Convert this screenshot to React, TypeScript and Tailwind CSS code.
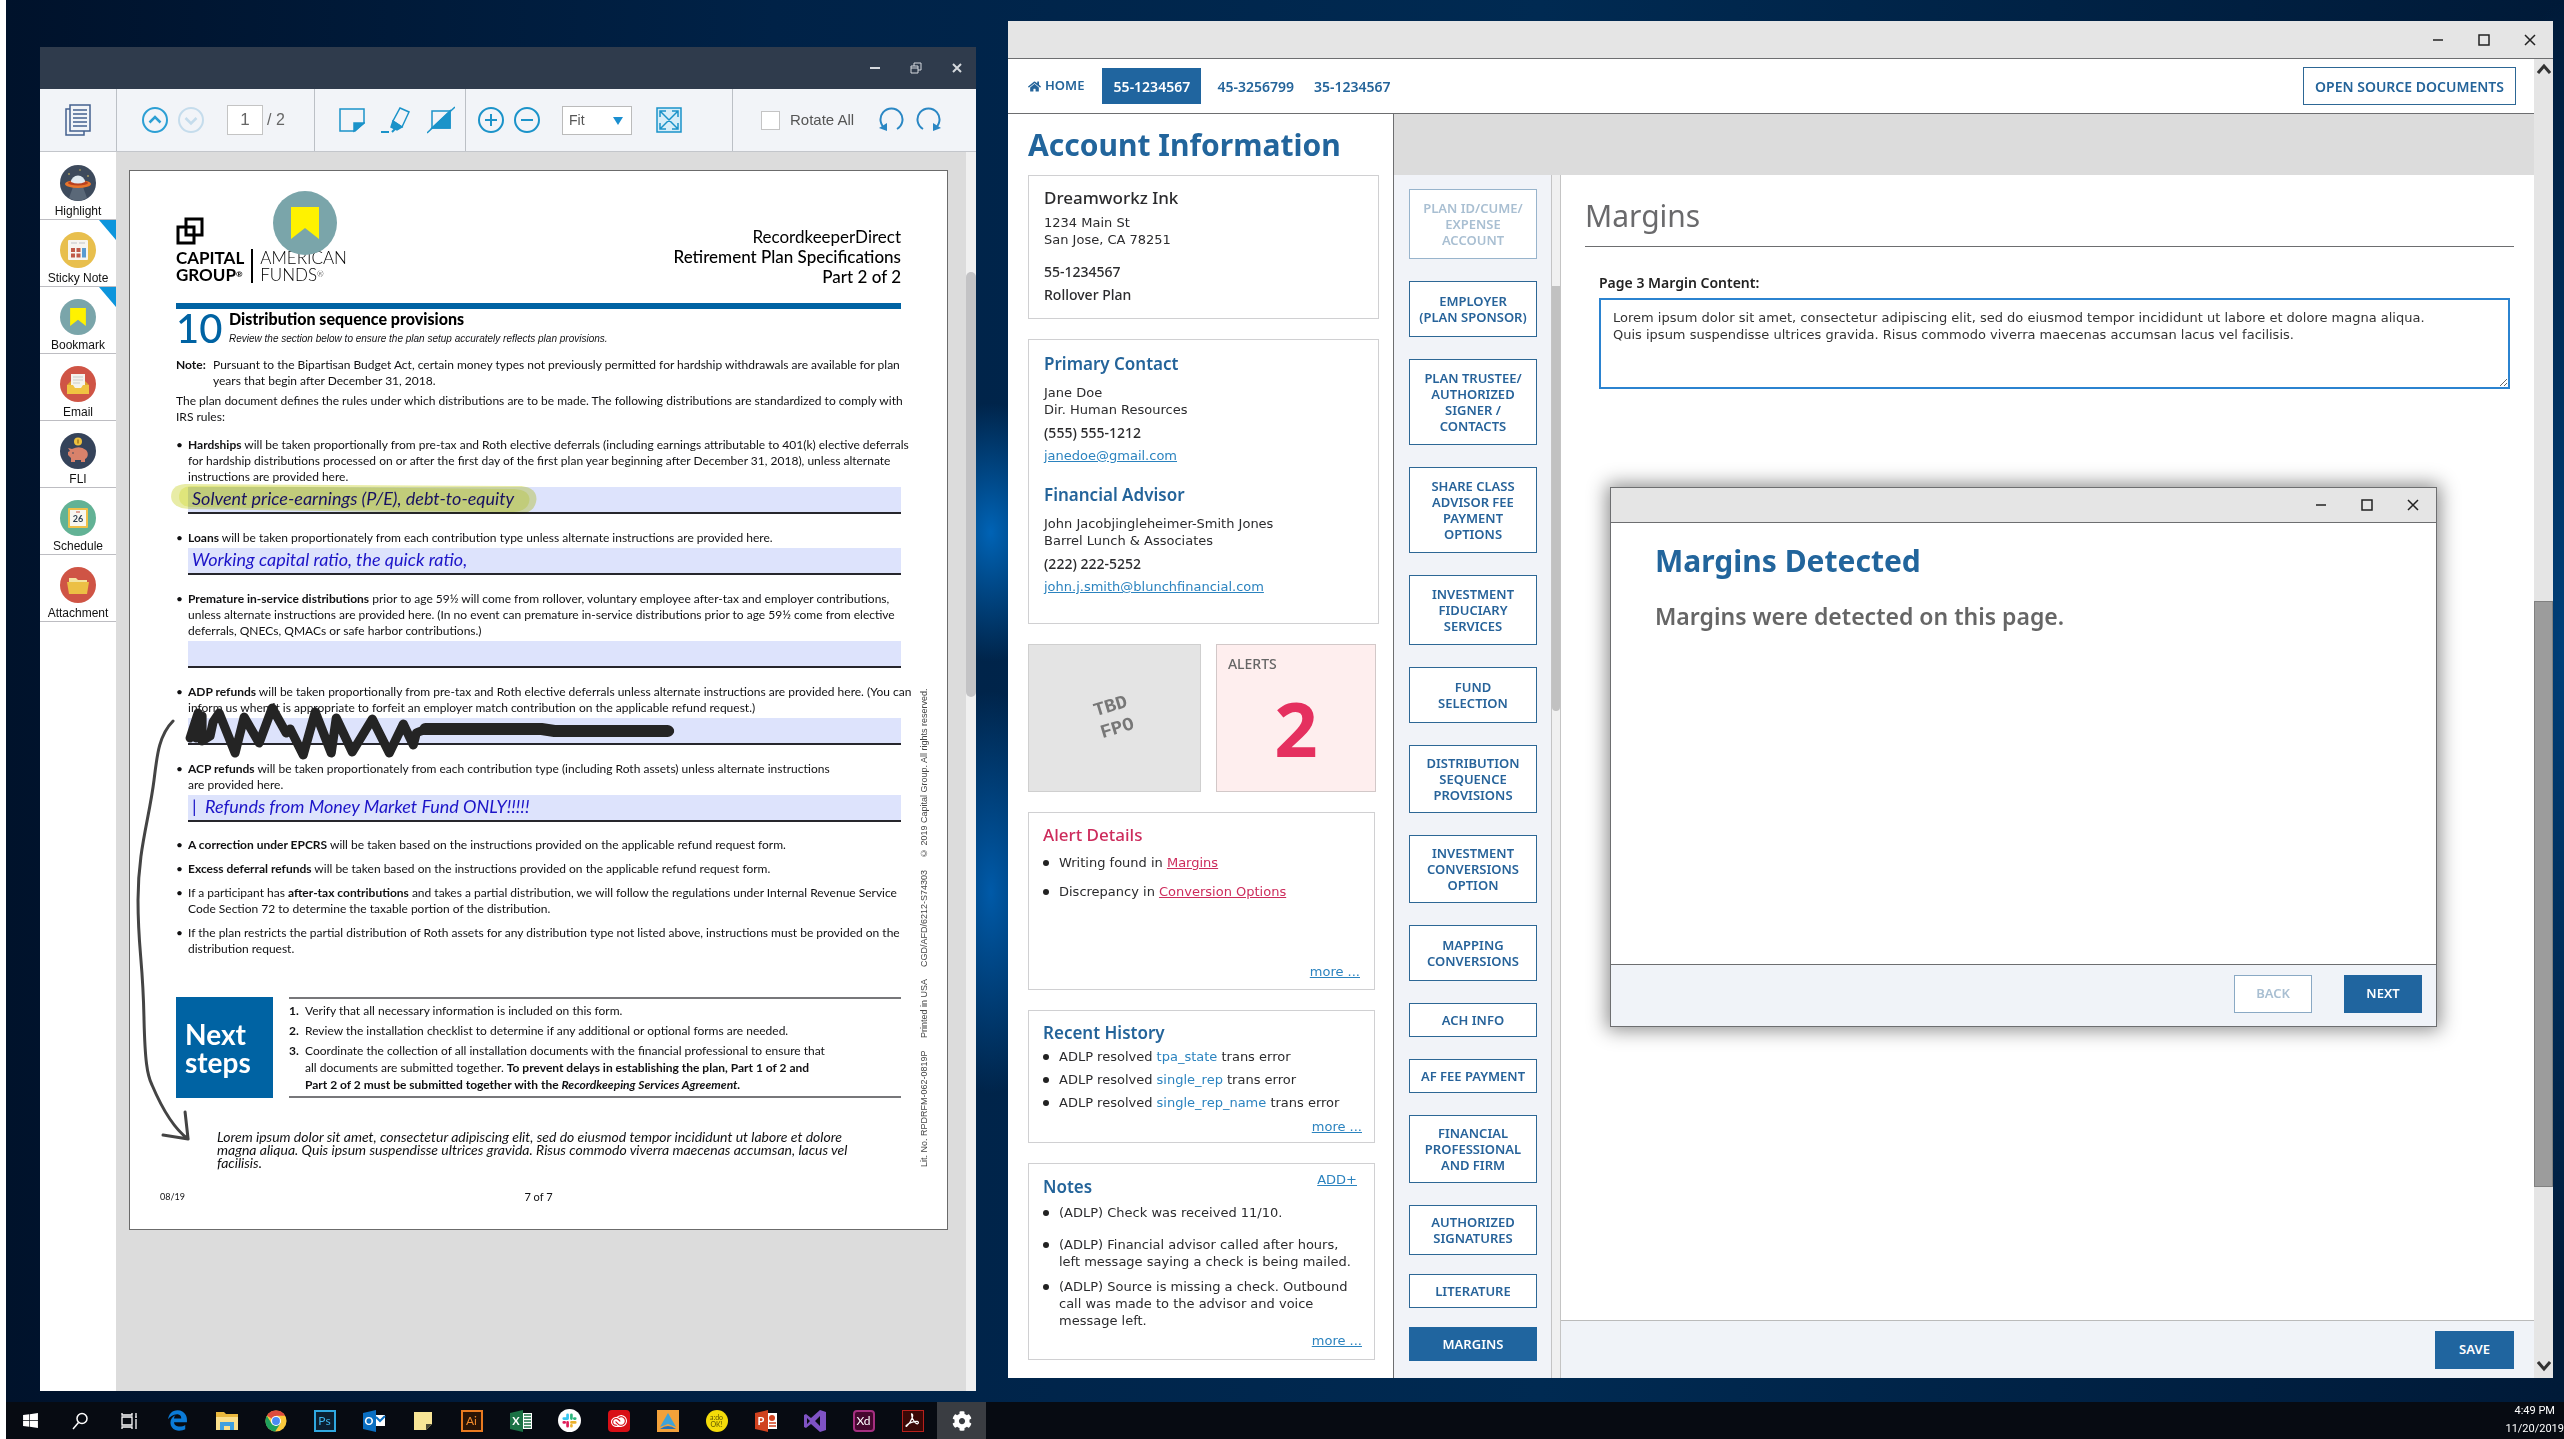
import type { ReactNode } from 'react';
import clsx from 'clsx';
import { FaHome, FaWindows, FaCog } from 'react-icons/fa';
import { FaEdgeLegacy } from 'react-icons/fa6';
import { SiAdobecreativecloud } from 'react-icons/si';

type NavItem = { label: string[]; height: string; state?: 'disabled' | 'active' };

const navItems: NavItem[] = [
  { label: ['PLAN ID/CUME/', 'EXPENSE', 'ACCOUNT'], height: 'h-[70px]', state: 'disabled' },
  { label: ['EMPLOYER', '(PLAN SPONSOR)'], height: 'h-14' },
  { label: ['PLAN TRUSTEE/', 'AUTHORIZED', 'SIGNER /', 'CONTACTS'], height: 'h-[86px]' },
  { label: ['SHARE CLASS', 'ADVISOR FEE', 'PAYMENT', 'OPTIONS'], height: 'h-[86px]' },
  { label: ['INVESTMENT', 'FIDUCIARY', 'SERVICES'], height: 'h-[70px]' },
  { label: ['FUND', 'SELECTION'], height: 'h-14' },
  { label: ['DISTRIBUTION', 'SEQUENCE', 'PROVISIONS'], height: 'h-[68px]' },
  { label: ['INVESTMENT', 'CONVERSIONS', 'OPTION'], height: 'h-[68px]' },
  { label: ['MAPPING', 'CONVERSIONS'], height: 'h-14' },
  { label: ['ACH INFO'], height: 'h-[34px]' },
  { label: ['AF FEE PAYMENT'], height: 'h-[34px]' },
  { label: ['FINANCIAL', 'PROFESSIONAL', 'AND FIRM'], height: 'h-[68px]' },
  { label: ['AUTHORIZED', 'SIGNATURES'], height: 'h-[50px]' },
];

const closingItems: NavItem[] = [
  { label: ['LITERATURE'], height: 'h-[34px]' },
  { label: ['MARGINS'], height: 'h-[34px]', state: 'active' },
];

const lorem =
  'Lorem ipsum dolor sit amet, consectetur adipiscing elit, sed do eiusmod tempor incididunt ut labore et dolore magna aliqua.\nQuis ipsum suspendisse ultrices gravida. Risus commodo viverra maecenas accumsan lacus vel facilisis.';

/* ---------- tool icons ---------- */

function BookmarkIcon({ className }: { className: string }) {
  return (
    <svg viewBox="0 0 64 64" className={className}>
      <circle cx="32" cy="32" r="32" fill="#7aa5aa" />
      <path d="M18 16h28v32L32 37 18 48z" fill="#fff200" />
    </svg>
  );
}

const tools: { label: string; corner?: boolean; icon: ReactNode }[] = [
  {
    label: 'Highlight',
    icon: (
      <svg viewBox="0 0 36 36" className="size-9">
        <circle cx="18" cy="18" r="18" fill="#3d4a5c" />
        <path d="M13 22h10l4 11a18 18 0 0 1-18 0z" fill="#5a6878" />
        <ellipse cx="18" cy="19" rx="13" ry="4" fill="#e8762c" />
        <ellipse cx="18" cy="18" rx="10" ry="2.500" fill="#b9411f" />
        <path d="M11 17a7 6.500 0 0 1 14 0q-7 3-14 0z" fill="#dfe9f0" />
        <circle cx="9" cy="9" r="0.800" fill="#f0d060" />
        <circle cx="28" cy="11" r="0.800" fill="#f0d060" />
        <circle cx="20" cy="5" r="0.700" fill="#f0d060" />
      </svg>
    ),
  },
  {
    label: 'Sticky Note',
    corner: true,
    icon: (
      <svg viewBox="0 0 36 36" className="size-9">
        <circle cx="18" cy="18" r="18" fill="#e8bf4d" />
        <rect x="8" y="8" width="20" height="20" rx="1" fill="#f7f5f0" />
        <path d="M11 11h6M19 11h6" stroke="#d4d4d4" strokeWidth="1.500" />
        <path d="M11 16h4v4h-4zM16.500 16h4v4h-4zM11 21.500h4v4h-4zM16.500 21.500h4v4h-4z" fill="#c05a48" />
        <path d="M22 16h4v9.500h-4z" fill="#5a9bd0" />
      </svg>
    ),
  },
  { label: 'Bookmark', corner: true, icon: <BookmarkIcon className="size-9" /> },
  {
    label: 'Email',
    icon: (
      <svg viewBox="0 0 36 36" className="size-9">
        <circle cx="18" cy="18" r="18" fill="#cf5445" />
        <path d="M7 19l4-4h14l4 4v9H7z" fill="#dfa32f" />
        <rect x="11" y="8" width="14" height="14" fill="#f5f3ec" />
        <path d="M13 11h10M13 14h10M13 17h7" stroke="#c9cdc9" />
        <path d="M7 19h6l2 3h6l2-3h6v9H7z" fill="#f0c341" />
      </svg>
    ),
  },
  {
    label: 'FLI',
    icon: (
      <svg viewBox="0 0 36 36" className="size-9">
        <circle cx="18" cy="18" r="18" fill="#35435a" />
        <circle cx="18" cy="8.500" r="4" fill="#efc13f" />
        <path d="M18 6.500v4" stroke="#a5781c" strokeWidth="1.500" />
        <path d="M8 15l4 1q8-4 14 1c3 3 2 8-1 9v3h-4v-2h-6v2h-4v-4l-3-3v-3l2-1z" fill="#d9826b" />
        <circle cx="13" cy="20" r="0.800" fill="#35435a" />
      </svg>
    ),
  },
  {
    label: 'Schedule',
    icon: (
      <svg viewBox="0 0 36 36" className="size-9">
        <circle cx="18" cy="18" r="18" fill="#62b295" />
        <rect x="8" y="8" width="20" height="20" rx="1" fill="#efc04a" />
        <rect x="10" y="10" width="16" height="16" fill="#f8f7f1" />
        <path d="M16 12h4" stroke="#c8553f" />
        <text x="18" y="22" textAnchor="middle" fontSize="9" fontWeight="700" fontFamily="Lato, sans-serif" fill="#2c3e50">26</text>
      </svg>
    ),
  },
  {
    label: 'Attachment',
    icon: (
      <svg viewBox="0 0 36 36" className="size-9">
        <circle cx="18" cy="18" r="18" fill="#cf5445" />
        <path d="M9 11h7l2 2h9v5H9z" fill="#f3e4a0" />
        <path d="M7 15h22l-2 12H9z" fill="#ecc044" />
      </svg>
    ),
  },
];

/* ---------- source document viewer ---------- */

function Divider() {
  return <span className="h-full w-px shrink-0 bg-[#bcc0c6]" />;
}

function Toolbar() {
  return (
    <div className="flex h-[63px] shrink-0 items-center border-b border-[#c3c6cb] bg-[#f2f4f8] text-[#1b93c9]">
      <div className="flex w-[76px] shrink-0 justify-center">
        <button aria-label="Pages">
          <svg viewBox="0 0 26 32" className="h-8 w-[26px]" fill="none" stroke="#44608f" strokeWidth="1.500">
            <path d="M5 1h20v26H5z M5 5H1v26h18v-4 M8 6h14M8 10h14M8 14h14M8 18h14M8 22h14" />
          </svg>
        </button>
      </div>
      <Divider />
      <div className="flex w-[197px] shrink-0 items-center pl-6 text-[17px] text-[#666]">
        <button aria-label="Previous page">
          <svg viewBox="0 0 28 28" className="size-7" fill="none" stroke="#2c9fd4" strokeWidth="2">
            <circle cx="14" cy="14" r="12" /><path d="M8.500 16.500L14 11l5.500 5.500" strokeWidth="2.500" />
          </svg>
        </button>
        <button aria-label="Next page" className="ml-2">
          <svg viewBox="0 0 28 28" className="size-7" fill="none" stroke="#c5dcec" strokeWidth="2">
            <circle cx="14" cy="14" r="12" /><path d="M8.500 12L14 17.500l5.500-5.500" strokeWidth="2.500" />
          </svg>
        </button>
        <input aria-label="Page" defaultValue="1" className="ml-[22px] h-[30px] w-9 border border-[#c4c4c4] bg-white text-center" />
        <span className="ml-1 text-base">/ 2</span>
      </div>
      <Divider />
      <div className="flex w-[150px] shrink-0 items-center gap-4 pl-6">
        <button aria-label="Add note">
          <svg viewBox="0 0 26 26" className="size-[26px]" fill="none" stroke="currentColor" strokeWidth="1.500">
            <path d="M1 2h24v14l-9 8H1z" /><path d="M15 24v-8h10z" fill="currentColor" />
          </svg>
        </button>
        <button aria-label="Marker">
          <svg viewBox="0 0 30 28" className="h-7 w-[30px]" fill="none" stroke="currentColor" strokeWidth="1.500">
            <path d="M19 2l9 4-7 15-9-6z" /><path d="M12 15l9 6-5 3-6-3z" fill="currentColor" /><path d="M0 26h8M11 26l3-3" strokeWidth="2" />
          </svg>
        </button>
        <button aria-label="Contrast">
          <svg viewBox="0 0 28 28" className="size-7" fill="none" stroke="currentColor" strokeWidth="1.500">
            <path d="M5 5h18v17H5z" /><path d="M23 5v17H5z" fill="currentColor" /><path d="M0 27L28 1" />
          </svg>
        </button>
      </div>
      <Divider />
      <div className="flex flex-1 items-center pl-3">
        <button aria-label="Zoom in">
          <svg viewBox="0 0 26 26" className="size-[26px]" fill="none" stroke="currentColor" strokeWidth="2">
            <circle cx="13" cy="13" r="12" /><path d="M7 13h12M13 7v12" />
          </svg>
        </button>
        <button aria-label="Zoom out" className="ml-[10px]">
          <svg viewBox="0 0 26 26" className="size-[26px]" fill="none" stroke="currentColor" strokeWidth="2">
            <circle cx="13" cy="13" r="12" /><path d="M7 13h12" />
          </svg>
        </button>
        <div className="relative ml-[22px]">
          <select aria-label="Zoom" className="h-[29px] w-[70px] appearance-none border border-[#bbb] bg-white pl-[6px] text-sm text-[#555]">
            <option>Fit</option>
          </select>
          <svg viewBox="0 0 10 8" className="pointer-events-none absolute top-[11px] right-[9px] h-2 w-[10px]">
            <path d="M0 0h10L5 8z" fill="#1b8fd0" />
          </svg>
        </div>
        <button aria-label="Full screen" className="ml-6">
          <svg viewBox="0 0 26 26" className="size-[26px]" fill="none" stroke="currentColor" strokeWidth="1.500">
            <path d="M1 1h24v24H1z" fill="#d6edf8" />
            <path d="M4 10V4h6M16 4h6v6M22 16v6h-6M10 22H4v-6M4 4l18 18M22 4L4 22" />
          </svg>
        </button>
      </div>
      <Divider />
      <div className="flex w-[243px] shrink-0 items-center pl-7">
        <label className="flex items-center gap-[10px] text-[15px] text-[#555]">
          <input type="checkbox" className="size-[19px] appearance-none border border-[#c4c4c4] bg-white" />
          Rotate All
        </label>
        <button aria-label="Rotate left" className="ml-6">
          <svg viewBox="0 0 26 26" className="size-[26px]" fill="none" stroke="#2a87c4" strokeWidth="2">
            <path d="M8 22A11 11 0 1 1 19 22" /><path d="M1 21l8 3 0-8z" fill="#2a87c4" stroke="none" />
          </svg>
        </button>
        <button aria-label="Rotate right" className="ml-3">
          <svg viewBox="0 0 26 26" className="size-[26px]" fill="none" stroke="#2a87c4" strokeWidth="2">
            <path d="M18 22A11 11 0 1 0 7 22" /><path d="M25 21l-8 3 0-8z" fill="#2a87c4" stroke="none" />
          </svg>
        </button>
      </div>
    </div>
  );
}

function Provision({ children, field, className }: { children: ReactNode; field?: string; className: string }) {
  return (
    <li className={clsx('flex', className)}>
      <span className="w-3 shrink-0">•</span>
      <div className="min-w-0 flex-1">
        <p className="whitespace-nowrap">{children}</p>
        {field !== undefined && (
          <input
            aria-label="Alternate instructions"
            defaultValue={field}
            className="mt-[2px] block h-[27px] w-full border-b-2 border-[#26262c] bg-[#dde3fc] px-1 pb-1 font-['Lato',sans-serif] text-[18px] text-[#1c14c8] italic"
          />
        )}
      </div>
    </li>
  );
}

function DocumentPage() {
  return (
    <article className="relative ml-[13px] flex border border-[#6b6b6b] bg-white font-['Lato',Arial,sans-serif] text-[12px] leading-4 text-[#101012]">
      <div className="min-w-0 flex-1 pt-[46px] pb-6 pl-[46px]">
        <header className="flex justify-between text-black">
          <div>
            <svg viewBox="0 0 28 28" className="size-7" fill="none" stroke="#000" strokeWidth="3">
              <path d="M10 2h16v16H10zM2 10h16v16H2z" />
            </svg>
            <div className="mt-1 flex text-[17px] leading-[17px]">
              <p className="border-r-2 border-black pr-[7px] font-bold">CAPITAL<br />GROUP<sup className="text-[8px]">®</sup></p>
              <p className="pl-[7px] font-light">AMERICAN<br />FUNDS<sup className="text-[8px]">®</sup></p>
            </div>
          </div>
          <div className="pt-[10px] text-right text-[17px] leading-5">
            <p>RecordkeeperDirect</p>
            <p className="font-medium">Retirement Plan Specifications</p>
            <p className="font-medium">Part 2 of 2</p>
          </div>
        </header>
        <div className="mt-4 h-[6px] bg-[#0063a3]" />
        <div className="flex">
          <span className="w-[53px] text-[40px] leading-[38px] font-medium text-[#0063a3]">10</span>
          <div className="leading-5">
            <h2 className="text-base leading-5 font-black text-black">Distribution sequence provisions</h2>
            <p className="font-['Liberation_Sans',Arial,sans-serif] text-[10px] italic">Review the section below to ensure the plan setup accurately reflects plan provisions.</p>
          </div>
        </div>
        <div className="mt-2 flex whitespace-nowrap">
          <b className="w-[37px] shrink-0">Note:</b>
          <p>Pursuant to the Bipartisan Budget Act, certain money types not previously permitted for hardship withdrawals are available for plan<br />years that begin after December 31, 2018.</p>
        </div>
        <p className="mt-1 whitespace-nowrap">The plan document defines the rules under which distributions are to be made. The following distributions are standardized to comply with<br />IRS rules:</p>
        <ul>
          <Provision className="mt-3" field="Solvent price-earnings (P/E), debt-to-equity">
            <b>Hardships</b> will be taken proportionally from pre-tax and Roth elective deferrals (including earnings attributable to 401(k) elective deferrals<br />
            for hardship distributions processed on or after the first day of the first plan year beginning after December 31, 2018), unless alternate<br />
            instructions are provided here.
          </Provision>
          <Provision className="mt-4" field="Working capital ratio, the quick ratio,">
            <b>Loans</b> will be taken proportionately from each contribution type unless alternate instructions are provided here.
          </Provision>
          <Provision className="mt-4" field="">
            <b>Premature in-service distributions</b> prior to age 59½ will come from rollover, voluntary employee after-tax and employer contributions,<br />
            unless alternate instructions are provided here. (In no event can premature in-service distributions prior to age 59½ come from elective<br />
            deferrals, QNECs, QMACs or safe harbor contributions.)
          </Provision>
          <Provision className="mt-4" field="">
            <b>ADP refunds</b> will be taken proportionally from pre-tax and Roth elective deferrals unless alternate instructions are provided here. (You can<br />
            inform us when it is appropriate to forfeit an employer match contribution on the applicable refund request.)
          </Provision>
          <Provision className="mt-4" field="|  Refunds from Money Market Fund ONLY!!!!!">
            <b>ACP refunds</b> will be taken proportionately from each contribution type (including Roth assets) unless alternate instructions<br />
            are provided here.
          </Provision>
          <Provision className="mt-[15px]"><b>A correction under EPCRS</b> will be taken based on the instructions provided on the applicable refund request form.</Provision>
          <Provision className="mt-2"><b>Excess deferral refunds</b> will be taken based on the instructions provided on the applicable refund request form.</Provision>
          <Provision className="mt-2">
            If a participant has <b>after-tax contributions</b> and takes a partial distribution, we will follow the regulations under Internal Revenue Service<br />
            Code Section 72 to determine the taxable portion of the distribution.
          </Provision>
          <Provision className="mt-2">
            If the plan restricts the partial distribution of Roth assets for any distribution type not listed above, instructions must be provided on the<br />
            distribution request.
          </Provision>
        </ul>
        <section className="mt-10 flex gap-4">
          <h3 className="flex w-[97px] items-center bg-[#0063a3] pl-[9px] text-[28px] leading-7 font-bold text-white">Next<br />steps</h3>
          <ol className="flex-1 space-y-[3px] border-y-2 border-[#77777a] py-[3px] leading-[17px]">
            <li className="flex"><b className="w-4">1.</b>Verify that all necessary information is included on this form.</li>
            <li className="flex"><b className="w-4">2.</b>Review the installation checklist to determine if any additional or optional forms are needed.</li>
            <li className="flex">
              <b className="w-4">3.</b>
              <p>
                Coordinate the collection of all installation documents with the financial professional to ensure that<br />
                all documents are submitted together. <b>To prevent delays in establishing the plan, Part 1 of 2 and<br />
                Part 2 of 2 must be submitted together with the <i>Recordkeeping Services Agreement.</i></b>
              </p>
            </li>
          </ol>
        </section>
        <p className="mt-8 pl-[41px] font-['Lato',cursive] text-[14px] leading-[13px] whitespace-nowrap italic">
          Lorem ipsum dolor sit amet, consectetur adipiscing elit, sed do eiusmod tempor incididunt ut labore et dolore<br />
          magna aliqua. Quis ipsum suspendisse ultrices gravida. Risus commodo viverra maecenas accumsan, lacus vel<br />
          facilisis.
        </p>
        <footer className="-mx-4 mt-5 flex text-[11px]">
          <span className="flex-1 text-[9px]">08/19</span>
          <span>7 of 7</span>
          <span className="flex-1" />
        </footer>
      </div>
      <p className="flex w-[46px] shrink-0 rotate-180 items-center justify-start gap-3 pt-[62px] font-['Liberation_Sans',Arial,sans-serif] text-[9px] whitespace-nowrap text-[#444] [writing-mode:vertical-rl]">
        <span>Lit. No. RPDRFM-062-0819P</span>
        <span>Printed in USA</span>
        <span>CGD/AFD/6212-S74303</span>
        <span>© 2019 Capital Group. All rights reserved.</span>
      </p>
      {/* pen and highlighter marks */}
      <svg viewBox="131 171 816 1058" preserveAspectRatio="none" className="pointer-events-none absolute inset-0 size-full mix-blend-multiply">
        <path d="M186 484L522 486Q537 488 537 499Q536 513 520 514L190 509Q173 508 172 497Q172 485 186 484z" fill="#d8e06a" fillOpacity="0.600" />
        <path d="M192 486L515 489Q530 490 530 500Q529 511 514 512L192 507Q180 506 180 497Q180 487 192 486z" fill="#dbe26a" fillOpacity="0.700" />
      </svg>
      <svg viewBox="131 171 816 1058" preserveAspectRatio="none" className="pointer-events-none absolute inset-0 size-full" fill="none" strokeLinecap="round" strokeLinejoin="round">
        <path
          d="M191 738L199 713L197 738L203 716L203 741L211 736L214 722L220 713L236 753L245 717L260 743L273 708L287 733L291 729L304 755L316 712L332 753L337 718L353 752L373 719L390 753L404 724L414 745L417 733Q423 729 446 729L542 729Q548 731 555 731L670 731"
          stroke="#242424" strokeWidth="9"
        />
        <path d="M426 729H542L555 731H668" stroke="#242424" strokeWidth="12" />
        <path d="M174 721C160 735 158 755 155 780C150 820 139 850 139 900C139 950 144 960 145 1020C146 1060 148 1075 153 1085Q170 1125 189 1139M164 1135L189 1139L186 1112" stroke="#444" strokeWidth="3" />
      </svg>
      <BookmarkIcon className="absolute top-5 left-[143px] size-16" />
    </article>
  );
}

function DocumentViewer() {
  return (
    <section className="mt-[47px] mb-[11px] flex w-[936px] shrink-0 flex-col bg-[#dcdcdc] font-['Liberation_Sans',Arial,sans-serif]">
      <div className="flex h-[42px] shrink-0 items-center justify-end gap-[27px] bg-[#2f3b4c] pr-3 text-[#d5d9de]">
        <button aria-label="Minimize"><svg viewBox="0 0 14 14" className="size-[14px]" stroke="currentColor" strokeWidth="2"><path d="M2 7h10" /></svg></button>
        <button aria-label="Restore"><svg viewBox="0 0 14 14" className="size-[14px]" fill="none" stroke="currentColor"><path d="M2 5h7v7H2zM2 7h7M5 5V2h7v7H9" /></svg></button>
        <button aria-label="Close"><svg viewBox="0 0 14 14" className="size-[14px]" stroke="currentColor" strokeWidth="2"><path d="M3 3l8 8M11 3l-8 8" /></svg></button>
      </div>
      <Toolbar />
      <div className="flex flex-1">
        <nav className="w-[76px] shrink-0 bg-white pt-px">
          {tools.map(t => (
            <button key={t.label} className="relative flex h-[67px] w-full flex-col items-center justify-end gap-[2px] border-b border-[#bdbdc2] text-[12px] leading-4 text-[#111]">
              {t.icon}
              {t.label}
              {t.corner && (
                <svg viewBox="0 0 17 20" className="absolute top-0 right-0 h-5 w-[17px]"><path d="M0 0h17v20z" fill="#0d95dc" /></svg>
              )}
            </button>
          ))}
        </nav>
        <div className="min-w-0 flex-1 pt-[18px] pr-[18px]">
          <DocumentPage />
        </div>
        <div className="w-[10px] bg-[#f0f0f0] pt-[120px]">
          <div className="h-[425px] rounded-full bg-[#c3c3c5]" />
        </div>
      </div>
    </section>
  );
}

/* ---------- account window ---------- */

function WindowButtons({ className }: { className: string }) {
  return (
    <div className={clsx('flex items-center justify-end border-b border-[#6d6e70] bg-[#e5e5e5] text-[#222]', className)}>
      <button aria-label="Minimize"><svg viewBox="0 0 12 12" className="size-3" stroke="currentColor" strokeWidth="1.500"><path d="M1 6h10" /></svg></button>
      <button aria-label="Maximize"><svg viewBox="0 0 12 12" className="size-3" fill="none" stroke="currentColor" strokeWidth="1.500"><path d="M1 1h10v10H1z" /></svg></button>
      <button aria-label="Close"><svg viewBox="0 0 12 12" className="size-3" stroke="currentColor" strokeWidth="1.500"><path d="M1 1l10 10M11 1L1 11" /></svg></button>
    </div>
  );
}

function Card({ children, className }: { children: ReactNode; className?: string }) {
  return <section className={clsx('border border-[#d0d0d2] bg-white', className)}>{children}</section>;
}

function CardTitle({ children, className }: { children: ReactNode; className: string }) {
  return <h2 className={clsx("font-['Noto_Sans',sans-serif] text-[17px] leading-5", className)}>{children}</h2>;
}

function Strong({ children, className }: { children: ReactNode; className: string }) {
  return <p className={clsx("font-['Noto_Sans',sans-serif] text-[14px] font-medium", className)}>{children}</p>;
}

function Contact({ title, name, role, phone, email }: { title: string; name: string; role: string; phone: string; email: string }) {
  return (
    <div>
      <CardTitle className="font-semibold text-[#24649a]">{title}</CardTitle>
      <p className="mt-[10px]">{name}</p>
      <p>{role}</p>
      <Strong className="mt-[6px]">{phone}</Strong>
      <a href={`mailto:${email}`} className="mt-[6px] block text-[#2b83bf] underline">{email}</a>
    </div>
  );
}

function Bullet({ children }: { children: ReactNode }) {
  return (
    <li className="flex whitespace-nowrap">
      <span className="mt-[6px] mr-[10px] size-[6px] shrink-0 rounded-full bg-[#222]" />
      <div>{children}</div>
    </li>
  );
}

function More() {
  return <a href="#more" className="text-[#2b83bf] underline">more ...</a>;
}

function AccountPanel() {
  return (
    <aside className="w-[386px] shrink-0 border-r border-[#6d6e70] bg-white pr-[14px] pl-5 font-['DejaVu_Sans',sans-serif] text-[13px] leading-[17px] text-[#2b2b2d]">
      <h1 className="flex h-[61px] items-center font-['Noto_Sans',sans-serif] text-[30px] leading-10 font-bold text-[#22659c]">Account Information</h1>
      <Card className="px-[15px] pt-3 pb-[15px]">
        <CardTitle className="font-medium">Dreamworkz Ink</CardTitle>
        <p className="mt-[6px]">1234 Main St</p>
        <p>San Jose, CA 78251</p>
        <Strong className="mt-[15px]">55-1234567</Strong>
        <Strong className="mt-[6px]">Rollover Plan</Strong>
      </Card>
      <Card className="mt-5 space-y-[21px] px-[15px] pt-[14px] pb-7">
        <Contact title="Primary Contact" name="Jane Doe" role="Dir. Human Resources" phone="(555) 555-1212" email="janedoe@gmail.com" />
        <Contact title="Financial Advisor" name="John Jacobjingleheimer-Smith Jones" role="Barrel Lunch & Associates" phone="(222) 222-5252" email="john.j.smith@blunchfinancial.com" />
      </Card>
      <div className="mt-5 mr-[3px] flex h-[148px] gap-[15px]">
        <div className="flex flex-[173] items-center justify-center border border-[#cfcfcf] bg-[#e4e4e4]">
          <p className="-rotate-[17deg] font-['Liberation_Mono',monospace] text-[19px] leading-[23px] font-bold text-[#777]">TBD<br />FPO</p>
        </div>
        <div className="flex-[160] border border-[#d2c8c8] bg-[#feeeee] pt-[9px] font-['Noto_Sans',sans-serif]">
          <h2 className="pl-[11px] text-sm leading-5 font-medium text-[#666]">ALERTS</h2>
          <p className="text-center text-[76px] leading-[108px] font-bold text-[#e5305f]">2</p>
        </div>
      </div>
      <Card className="mt-5 mr-1 flex h-[178px] flex-col pt-3 pr-[14px] pb-[9px] pl-[14px]">
        <CardTitle className="font-medium text-[#cd2c5c]">Alert Details</CardTitle>
        <ul className="mt-[9px] flex-1 space-y-3">
          <Bullet>Writing found in <a href="#margins" className="text-[#cd2c5c] underline">Margins</a></Bullet>
          <Bullet>Discrepancy in <a href="#conversion" className="text-[#cd2c5c] underline">Conversion Options</a></Bullet>
        </ul>
        <div className="text-right"><More /></div>
      </Card>
      <Card className="mt-5 mr-1 pt-3 pr-3 pb-[7px] pl-[14px]">
        <CardTitle className="font-semibold text-[#24649a]">Recent History</CardTitle>
        <ul className="mt-[5px] space-y-[6px]">
          {['tpa_state', 'single_rep', 'single_rep_name'].map(f => (
            <Bullet key={f}>ADLP resolved <span className="text-[#2b83bf]">{f}</span> trans error</Bullet>
          ))}
        </ul>
        <div className="mt-[7px] text-right"><More /></div>
      </Card>
      <Card className="mt-5 mr-1 pt-[7px] pr-3 pb-[10px] pl-[14px]">
        <div className="flex justify-between">
          <CardTitle className="pt-[6px] font-semibold text-[#24649a]">Notes</CardTitle>
          <a href="#add" className="mr-[5px] text-[#2b83bf] underline">ADD+</a>
        </div>
        <ul className="mt-[7px]">
          <Bullet>(ADLP) Check was received 11/10.</Bullet>
          <li className="h-[15px]" aria-hidden />
          <Bullet>(ADLP) Financial advisor called after hours,<br />left message saying a check is being mailed.</Bullet>
          <li className="h-2" aria-hidden />
          <Bullet>(ADLP) Source is missing a check. Outbound<br />call was made to the advisor and voice<br />message left.</Bullet>
        </ul>
        <div className="mt-[3px] text-right"><More /></div>
      </Card>
    </aside>
  );
}

function NavButton({ item }: { item: NavItem }) {
  return (
    <button
      disabled={item.state === 'disabled'}
      className={clsx(
        'flex w-full shrink-0 items-center justify-center border text-[13px] leading-4 font-semibold whitespace-nowrap',
        item.height,
        item.state === 'disabled' && 'border-[#98b4cc] bg-white text-[#a9bfd2]',
        item.state === 'active' && 'border-[#20659f] bg-[#20659f] text-white',
        !item.state && 'border-[#2d6795] bg-white text-[#27639a]',
      )}
    >
      <span>{item.label.map(line => <span key={line} className="block">{line}</span>)}</span>
    </button>
  );
}

function SectionNav() {
  return (
    <nav className="flex w-[157px] shrink-0 flex-col gap-[19px] bg-[#f1f3f8] pt-[14px] pr-[14px] pb-[17px] pl-[15px]">
      <div className="flex flex-col gap-[22px]">
        {navItems.map(item => <NavButton key={item.label.join(' ')} item={item} />)}
      </div>
      {closingItems.map(item => <NavButton key={item.label.join(' ')} item={item} />)}
    </nav>
  );
}

function MarginsDialog() {
  return (
    <div role="dialog" aria-labelledby="dialog-title" className="absolute top-[312px] right-[97px] left-[49px] flex h-[540px] flex-col border border-[#6d6e70] bg-white shadow-[0_0_18px_3px_rgba(0,0,0,0.45)]">
      <WindowButtons className="h-[35px] gap-[34px] pr-[17px]" />
      <div className="flex-1 px-11 pt-[18px]">
        <h2 id="dialog-title" className="text-[30px] leading-10 font-bold text-[#22659c]">Margins Detected</h2>
        <p className="mt-[19px] text-[23px] leading-8 font-semibold text-[#666]">Margins were detected on this page.</p>
      </div>
      <div className="flex h-[62px] items-start justify-end gap-8 border-t border-[#6d6e70] bg-[#f0f3f8] pt-[10px] pr-[14px] text-[13px] font-semibold">
        <button className="h-[38px] w-[78px] border border-[#8aa9c4] bg-white text-[#a9bfd2]">BACK</button>
        <button className="h-[38px] w-[78px] bg-[#20659f] text-white">NEXT</button>
      </div>
    </div>
  );
}

function AccountWindow() {
  return (
    <section className="mt-[21px] mb-6 flex min-w-0 flex-1 flex-col bg-white font-['Noto_Sans','Open_Sans',sans-serif]">
      <WindowButtons className="h-[38px] shrink-0 gap-[34px] pr-[17px]" />
      <div className="flex flex-1">
        <div className="flex min-w-0 flex-1 flex-col">
          <header className="flex h-[55px] items-center border-b border-[#6d6e70] pr-[18px] pl-5 text-[14px] font-semibold text-[#24649a]">
            <a href="#home" className="flex items-center gap-1 text-[13px]"><FaHome className="size-[13px]" />HOME</a>
            <nav className="ml-[18px] flex flex-1 items-center">
              <a href="#55" className="flex h-9 w-[99px] items-center justify-center bg-[#20659f] text-white">55-1234567</a>
              <a href="#45" className="ml-4">45-3256799</a>
              <a href="#35" className="ml-5">35-1234567</a>
            </nav>
            <button className="h-[38px] w-[213px] border border-[#2d6795]">OPEN SOURCE DOCUMENTS</button>
          </header>
          <div className="flex flex-1">
            <AccountPanel />
            <div className="flex min-w-0 flex-1 flex-col">
              <div className="h-[61px] bg-[#dcdcdc]" />
              <div className="flex flex-1">
                <SectionNav />
                <div className="w-[10px] border-x border-[#c4c4c4] bg-[#f0f0f0] pt-[111px]">
                  <div className="h-[425px] rounded-b-full bg-[#c1c1c1]" />
                </div>
                <main className="relative flex min-w-0 flex-1 flex-col">
                  <div className="flex-1 px-6 pt-4">
                    <h1 className="mr-[-4px] h-14 border-b border-[#6d6e70] text-[30px] leading-[50px] text-[#6a6a6c]">Margins</h1>
                    <div className="pt-[26px] pl-[14px]">
                      <label htmlFor="margin-content" className="block text-[14px] leading-5 font-semibold text-[#222]">Page 3 Margin Content:</label>
                      <textarea
                        id="margin-content"
                        defaultValue={lorem}
                        className="mt-[5px] block h-[91px] w-full border-2 border-[#2b83d0] px-3 pt-[9px] font-['DejaVu_Sans',sans-serif] text-[13px] leading-[17px] text-[#333]"
                      />
                    </div>
                  </div>
                  <MarginsDialog />
                  <footer className="flex h-[58px] items-center justify-end border-t border-[#bbb] bg-[#f0f3f8] pr-5">
                    <button className="h-[38px] w-[79px] bg-[#20659f] text-[13px] font-semibold text-white">SAVE</button>
                  </footer>
                </main>
              </div>
            </div>
          </div>
        </div>
        <div className="flex w-[19px] shrink-0 flex-col items-center bg-[#e5e5e5] text-[#333]">
          <svg viewBox="0 0 14 12" className="mt-1 h-3 w-[14px] shrink-0" fill="none" stroke="currentColor" strokeWidth="3"><path d="M1 10l6-7 6 7" /></svg>
          <div className="flex w-full flex-1 flex-col">
            <div className="flex-[526]" />
            <div className="flex-[585] border border-[#808080] bg-[#9c9c9c]" />
            <div className="flex-[173]" />
          </div>
          <svg viewBox="0 0 14 12" className="mb-[6px] h-3 w-[14px] shrink-0" fill="none" stroke="currentColor" strokeWidth="3"><path d="M1 2l6 7 6-7" /></svg>
        </div>
      </div>
    </section>
  );
}

/* ---------- taskbar ---------- */

function Tile({ children, className }: { children: ReactNode; className: string }) {
  return <span className={clsx("flex h-[22px] w-[22px] items-center justify-center border-2 font-['Lato',sans-serif] text-[12px] leading-none", className)}>{children}</span>;
}

function OfficeIcon({ letter, color, children }: { letter: string; color: string; children: ReactNode }) {
  return (
    <svg viewBox="0 0 24 24" className="size-6">
      {children}
      <path d="M1 4l13-3v22L1 20z" fill={color} />
      <text x="7" y="16" textAnchor="middle" fontSize="11" fontWeight="700" fontFamily="Lato, sans-serif" fill="#fff">{letter}</text>
    </svg>
  );
}

const taskbar: { name: string; icon: ReactNode }[] = [
  { name: 'Start', icon: <FaWindows className="size-[17px] text-white" /> },
  { name: 'Search', icon: <svg viewBox="0 0 18 18" className="size-[18px]" fill="none" stroke="#fff" strokeWidth="1.500"><circle cx="11" cy="6.500" r="5" /><path d="M7.500 10.500L2 17" /></svg> },
  { name: 'Task view', icon: <svg viewBox="0 0 18 18" className="size-[18px]" fill="none" stroke="#fff" strokeWidth="1.300"><path d="M2 5h10v8H2zM2 1v2h10V1M2 17v-2h10v2M16 1v3M16 7v10M15 5h2" /></svg> },
  { name: 'Edge', icon: <FaEdgeLegacy className="size-[21px] text-[#0b7bd7]" /> },
  { name: 'Explorer', icon: <svg viewBox="0 0 24 20" className="h-5 w-6"><path d="M1 1h8l2 2h12v16H1z" fill="#e9b83e" /><path d="M1 6h22v13H1z" fill="#fbe08c" /><path d="M5 19v-8h14v8h-4v-4H9v4z" fill="#3fa0e0" /></svg> },
  { name: 'Chrome', icon: <svg viewBox="0 0 24 24" className="size-[22px]"><circle cx="12" cy="12" r="11.500" fill="#fccb3c" /><path d="M12 12L2 6.200A11.500 11.500 0 0 1 22 6.300H12z" fill="#dd4b3e" /><path d="M2 6.200A11.500 11.500 0 0 0 11 23.500L17 14.500 7 14.500z" fill="#1fa15c" /><circle cx="12" cy="12" r="5.500" fill="#fff" /><circle cx="12" cy="12" r="4.300" fill="#4a8af4" /></svg> },
  { name: 'Photoshop', icon: <Tile className="border-[#2fa8e0] bg-[#0b1f30] text-[#3fb4ea]">Ps</Tile> },
  { name: 'Outlook', icon: <OfficeIcon letter="O" color="#0a6fc2"><path d="M13 6h10v11H13z" fill="#fff" /><path d="M14 8l4 4 5-5" fill="none" stroke="#0a6fc2" strokeWidth="2" /></OfficeIcon> },
  { name: 'Sticky Notes', icon: <svg viewBox="0 0 20 20" className="size-5"><path d="M1 1h18v12l-6 6H1z" fill="#f7e596" /><path d="M13 19v-6h6z" fill="#4b4834" /></svg> },
  { name: 'Illustrator', icon: <Tile className="border-[#e87a20] bg-[#2a1405] text-[#f08a2c]">Ai</Tile> },
  { name: 'Excel', icon: <OfficeIcon letter="X" color="#1b7245"><path d="M13 4h10v16H13z" fill="#fff" /><path d="M15 6h7M15 9h7M15 12h7M15 15h7M15 18h7" stroke="#1b7245" strokeWidth="1.500" /></OfficeIcon> },
  { name: 'Slack', icon: <svg viewBox="0 0 24 24" className="size-[23px]"><circle cx="12" cy="12" r="12" fill="#fff" /><g strokeWidth="2.800" strokeLinecap="round"><path d="M10 6v4M6 10h4" stroke="#36c5f0" /><path d="M14 6v4M18 10h-1" stroke="#2eb67d" /><path d="M14 14h4M14 18v-1" stroke="#ecb22e" /><path d="M10 14v4M6 14h1" stroke="#e01e5a" /></g></svg> },
  { name: 'Creative Cloud', icon: <span className="flex size-[22px] items-center justify-center rounded-sm bg-[#d80f16]"><SiAdobecreativecloud className="size-4 text-white" /></span> },
  { name: 'Ascent', icon: <svg viewBox="0 0 22 22" className="size-[22px]"><path d="M0 0h22v22H0z" fill="#f2a13a" /><path d="M11 3l8 14-8-3-8 3z" fill="#3fa3d8" /><path d="M3 19q8-6 16 0z" fill="#2471b8" /></svg> },
  { name: 'Notes', icon: <span className="flex size-[22px] items-center justify-center rounded-full bg-[#f4dc0a] font-['Lato',sans-serif] text-[7px] leading-[7px] text-[#5f5600]">a:do<br />OK!</span> },
  { name: 'PowerPoint', icon: <OfficeIcon letter="P" color="#d0421f"><path d="M13 4h10v16H13z" fill="#fff" /><path d="M15 14h7M15 17h7" stroke="#d0421f" strokeWidth="1.500" /><circle cx="18" cy="9" r="3" fill="#d0421f" /></OfficeIcon> },
  { name: 'Visual Studio', icon: <svg viewBox="0 0 24 24" className="size-6"><path d="M17 1l6 2v18l-6 2-9-8-5 4-2-1V6l2-1 5 4zM17 7l-5 5 5 5zM4 9v6l3-3z" fill="#7f53c4" fillRule="evenodd" /></svg> },
  { name: 'XD', icon: <Tile className="rounded-sm border-[#a52f80] bg-[#45082f] text-white">Xd</Tile> },
  { name: 'Acrobat', icon: <span className="flex size-[22px] items-center justify-center border border-[#b8201c] bg-[#3a0806]"><svg viewBox="0 0 18 18" className="size-[17px]" fill="none" stroke="#fff" strokeWidth="1.300"><path d="M8 2c3 0 0 8-5 13-2 1-1-2 5-4s8-1 7 1-7-3-7-10z" /></svg></span> },
  { name: 'Settings', icon: <FaCog className="size-5 text-white" /> },
];

function Taskbar() {
  return (
    <footer className="flex h-[37px] shrink-0 items-stretch bg-[#070b12]">
      {taskbar.map(t => (
        <button key={t.name} aria-label={t.name} className={clsx('flex w-[49px] items-center justify-center', t.name === 'Settings' && 'bg-[#3a3d42]')}>
          {t.icon}
        </button>
      ))}
      <p className="ml-auto text-center font-['Roboto',sans-serif] text-[11px] leading-[18px] text-white">4:49 PM<br />11/20/2019</p>
    </footer>
  );
}

export default function App() {
  return (
    <div className="flex min-h-screen flex-col border-l-[6px] border-white bg-[#001b3a] bg-[radial-gradient(ellipse_3%_9%_at_38.5%_37%,#0063b5,transparent),radial-gradient(ellipse_3%_14%_at_38.5%_62%,#005aa8,transparent),radial-gradient(ellipse_4%_45%_at_100%_45%,#00407a,transparent),linear-gradient(90deg,#00122b,#002247_30%,#002a52_60%,#001a38)]">
      <div className="flex flex-1 gap-8 pr-[11px] pl-[34px]">
        <DocumentViewer />
        <AccountWindow />
      </div>
      <Taskbar />
    </div>
  );
}
